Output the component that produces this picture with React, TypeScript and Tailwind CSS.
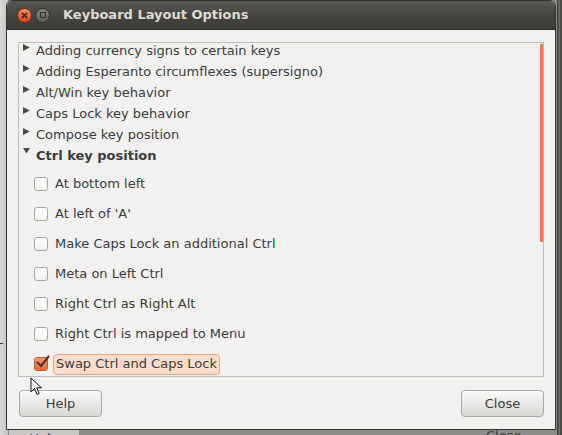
import React from 'react';

const font = { fontFamily: '"DejaVu Sans", "Liberation Sans", sans-serif' };

const groups = [
  'Adding currency signs to certain keys',
  'Adding Esperanto circumflexes (supersigno)',
  'Alt/Win key behavior',
  'Caps Lock key behavior',
  'Compose key position',
];

const options = [
  { label: 'At bottom left', checked: false },
  { label: "At left of 'A'", checked: false },
  { label: 'Make Caps Lock an additional Ctrl', checked: false },
  { label: 'Meta on Left Ctrl', checked: false },
  { label: 'Right Ctrl as Right Alt', checked: false },
  { label: 'Right Ctrl is mapped to Menu', checked: false },
  { label: 'Swap Ctrl and Caps Lock', checked: true },
];

const Arrow = ({ open }: { open?: boolean }) =>
  open ? (
    <svg width="9" height="9" viewBox="0 0 9 9" className="shrink-0 relative -top-[5px]">
      <polygon points="1,2 8,2 4.5,7.5" fill="#4a4a48" />
    </svg>
  ) : (
    <svg width="9" height="9" viewBox="0 0 9 9" className="shrink-0 relative -top-[3px]">
      <polygon points="1,1 7.8,4.5 1,8" fill="#4a4a48" />
    </svg>
  );

const Checkbox = ({ checked }: { checked: boolean }) =>
  checked ? (
    <div className="relative w-[14px] h-[14px] rounded-[3px] border border-[#c8552b] bg-gradient-to-b from-[#f39a72] to-[#e46a3c]">
      <svg width="16" height="16" viewBox="0 0 16 16" className="absolute -top-[4px] left-0">
        <path d="M2.5 8.5 L6 12 L13.5 2.5" stroke="#5b3424" strokeWidth="2.2" fill="none" strokeLinecap="round" strokeLinejoin="round" />
      </svg>
    </div>
  ) : (
    <div className="w-[14px] h-[14px] rounded-[3px] border border-[#a7a5a0] bg-gradient-to-b from-[#ffffff] to-[#f3f2f0]" />
  );

const Button = ({ children }: { children: React.ReactNode }) => (
  <button className="w-[83px] h-[27px] rounded-[4px] border border-[#a9a7a2] bg-gradient-to-b from-[#f9f9f8] to-[#d9d8d5] text-[13px] text-[#3c3c3c] shadow-[inset_0_1px_0_#ffffff]">
    {children}
  </button>
);

export default function App() {
  return (
    <div className="relative w-[562px] h-[435px] overflow-hidden bg-[#8e8d8a]" style={font}>
      {/* desktop behind */}
      <div className="absolute left-0 top-0 w-[8px] h-[435px] bg-gradient-to-r from-[#d9d9d8] to-[#c4c3c1]" />
      <div className="absolute left-0 top-[338px] text-[13px] text-[#3c3c3c] -ml-[5px]">T</div>
      <div className="absolute left-[8px] top-[424px] w-[72px] h-[30px] rounded-[4px] border border-[#8a8985] bg-[#c9c8c5] text-center pt-[4px] text-[13px] text-[#3c3c3c]">
        Help
      </div>
      <div className="absolute left-[486px] top-[426px] text-[13px] text-[#3c3c3c]">Close</div>
      <div className="absolute left-[557px] top-0 w-[5px] h-[435px] bg-gradient-to-r from-[#3a3936] via-[#6c6b68] to-[#2f2e2b]" />

      {/* window */}
      <div className="absolute left-[6px] top-0 w-[550px] h-[430px] flex flex-col rounded-t-[6px] overflow-hidden border border-[#33322f] bg-[#f2f1f0]">
        <div className="h-[29px] shrink-0 flex items-center bg-gradient-to-b from-[#5a5954] via-[#45443f] to-[#3c3b37] border-b border-[#2e2d2a]">
          <div className="ml-[10px] w-[15px] h-[15px] rounded-full bg-gradient-to-b from-[#f58a5e] to-[#d2451a] border border-[#7a2a10] flex items-center justify-center">
            <svg width="7" height="7" viewBox="0 0 7 7">
              <path d="M1 1 L6 6 M6 1 L1 6" stroke="#3b1a0c" strokeWidth="1.4" />
            </svg>
          </div>
          <div className="ml-[3px] w-[15px] h-[15px] rounded-full bg-gradient-to-b from-[#85847f] to-[#5f5e5a] border border-[#2f2e2b] flex items-center justify-center">
            <div className="w-[6px] h-[6px] border border-[#2f2e2b]" />
          </div>
          <div className="ml-[13px] text-[13px] font-bold text-[#dfdbd2]">Keyboard Layout Options</div>
        </div>

        <div className="flex-1 flex flex-col pt-[12px] pl-[11px] pr-[10px]">
          <div className="relative w-[526px] h-[335px] border border-[#c0bdb8] overflow-hidden text-[13px] text-[#3c3c3c]">
            <div className="absolute right-0 top-[1px] w-[3px] h-[198px] bg-[#f47a47]" />
            <div className="-mt-[3px]">
              {groups.map((g) => (
                <div key={g} className="h-[21px] flex items-center pl-[3px]">
                  <Arrow />
                  <span className="ml-[5px] whitespace-nowrap">{g}</span>
                </div>
              ))}
              <div className="h-[21px] flex items-center pl-[3px]">
                <Arrow open />
                <span className="ml-[5px] font-bold whitespace-nowrap">Ctrl key position</span>
              </div>
              <div className="pt-[3px]">
                {options.map((o) => (
                  <div key={o.label} className="h-[30px] flex items-center pl-[15px]">
                    <Checkbox checked={o.checked} />
                    {o.checked ? (
                      <span className="ml-[5px] h-[21px] flex items-center px-[2px] rounded-[4px] border border-[#f1a07c] bg-[#f8dccd] whitespace-nowrap">
                        {o.label}
                      </span>
                    ) : (
                      <span className="ml-[7px] whitespace-nowrap">{o.label}</span>
                    )}
                  </div>
                ))}
              </div>
            </div>
          </div>

          <div className="mt-[13px] flex justify-between pl-[1px] pr-[1px]">
            <Button>Help</Button>
            <Button>Close</Button>
          </div>
        </div>
      </div>

      {/* mouse pointer */}
      <svg width="14" height="20" viewBox="0 0 14 20" className="absolute left-[30px] top-[377px]">
        <path d="M1 1 L1 15 L4.5 11.5 L7 17.5 L9.2 16.5 L6.8 10.8 L11.5 10.8 Z" fill="#ffffff" stroke="#111111" strokeWidth="1" strokeLinejoin="round" />
      </svg>
    </div>
  );
}
